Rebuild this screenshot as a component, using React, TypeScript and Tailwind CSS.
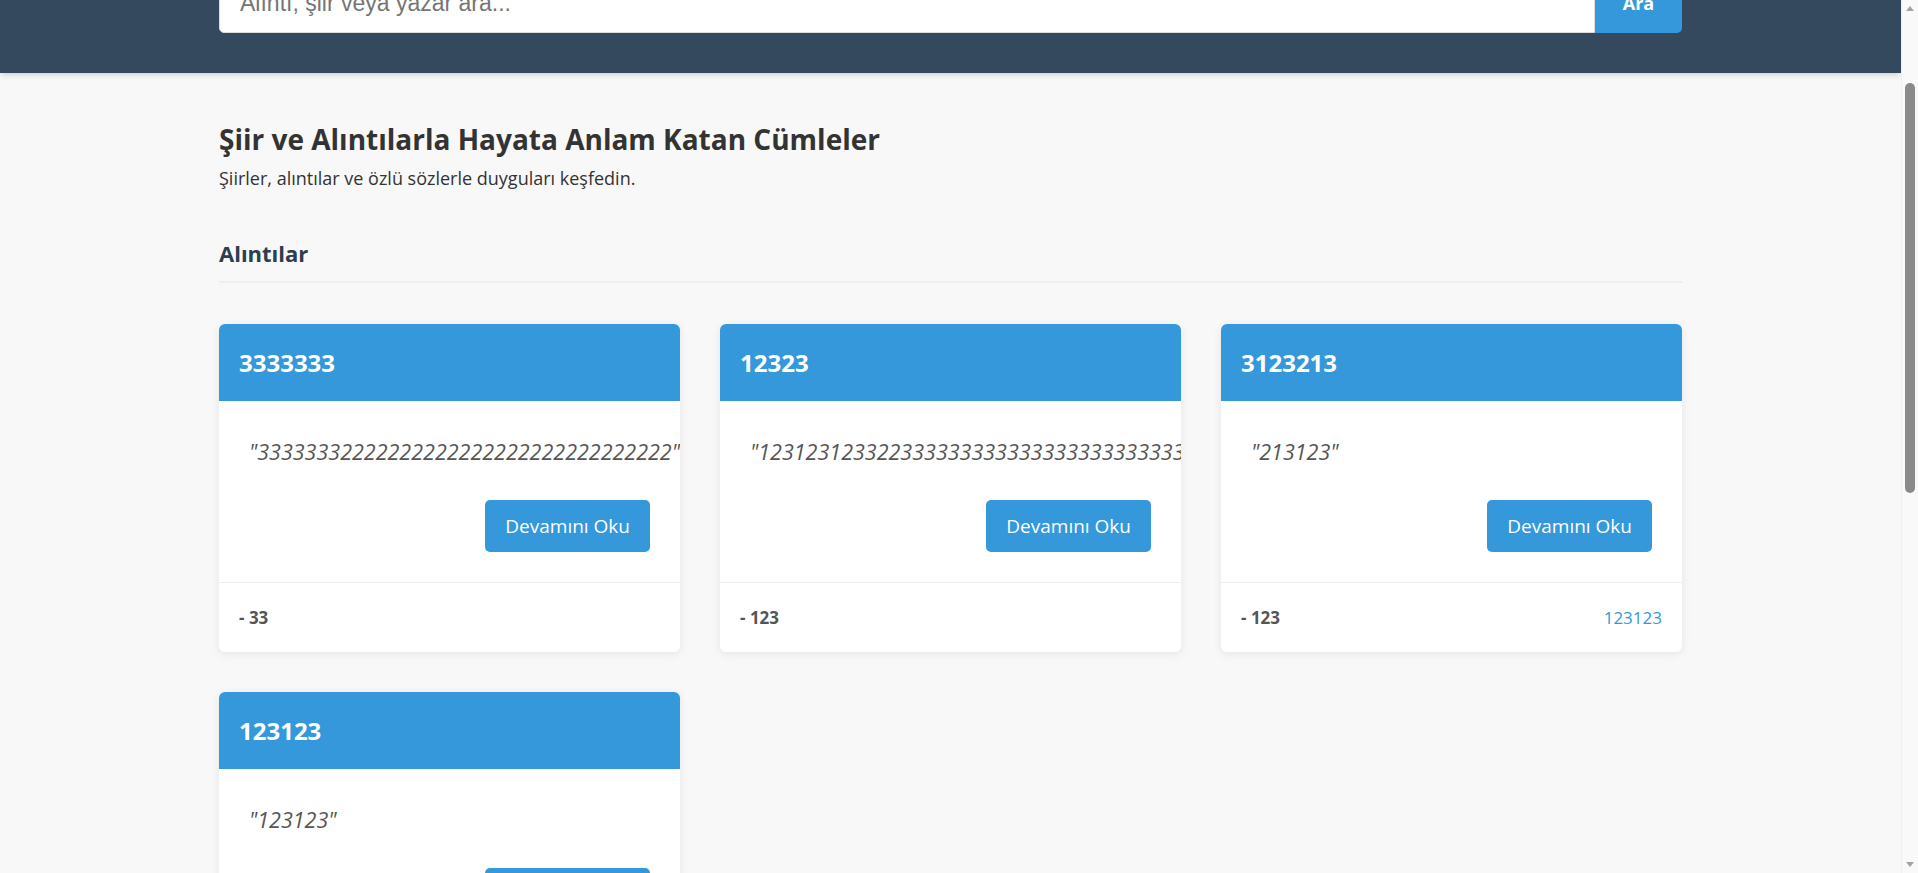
import { useLayoutEffect } from 'react';

interface Quote {
  id: number;
  title: string;
  text: string;
  author: string;
  source?: string;
}

const quotes: Quote[] = [
  { id: 1, title: '3333333', text: '33333332222222222222222222222222222', author: '33' },
  { id: 2, title: '12323', text: '123123123322333333333333333333333333333333333', author: '123' },
  { id: 3, title: '3123213', text: '213123', author: '123', source: '123123' },
  { id: 4, title: '123123', text: '123123', author: '123' },
];

function QuoteCard({ quote }: { quote: Quote }) {
  return (
    <div className="bg-white rounded-md shadow-[0_2px_10px_rgba(0,0,0,0.08)] overflow-hidden">
      <div className="bg-[#3498db] px-5 pt-[21px] pb-5">
        <h3 className="text-[24px] leading-[36px] font-bold text-white">{quote.title}</h3>
      </div>
      <div className="px-[30px] pt-[33px] pb-[30px]">
        <p className="text-[21.5px] leading-[36px] italic text-[#555] whitespace-nowrap">"{quote.text}"</p>
        <div className="flex justify-end mt-[30px]">
          <button className="h-[52px] px-5 bg-[#3498db] text-white text-[19px] rounded-[5px] hover:bg-[#2980b9]">
            Devamını Oku
          </button>
        </div>
      </div>
      <div className="border-t border-[#eee] h-[70px] px-5 flex items-center justify-between">
        <span className="text-[17px] font-bold text-[#555]">- {quote.author}</span>
        {quote.source && <a className="text-[17px] text-[#3498db]">{quote.source}</a>}
      </div>
    </div>
  );
}

// the browser's own scrollbar, as it shows in the screenshot
function ScrollbarStrip() {
  return (
    <div className="fixed top-0 right-0 h-screen w-[17px] bg-[#f9f9f9] border-l border-[#f0f0f0] flex flex-col items-center">
      <svg width="10" height="17" viewBox="0 0 10 17" className="shrink-0">
        <path d="M1 11 L5 6 L9 11 Z" fill="#a3a3a3" />
      </svg>
      <div className="mt-[66px] w-[10px] h-[410px] rounded-full bg-[#8a8a8a]" />
      <div className="flex-1" />
      <svg width="10" height="17" viewBox="0 0 10 17" className="shrink-0">
        <path d="M1 6 L5 11 L9 6 Z" fill="#a3a3a3" />
      </svg>
    </div>
  );
}

export default function App() {
  useLayoutEffect(() => {
    window.scrollTo(0, 140);
  }, []);

  return (
    <div className="min-h-[1780px] pr-[17px] bg-[#f8f8f8] font-['Open_Sans',sans-serif] text-[#333]">
      <header className="bg-[#34495e] shadow-md pt-[30px] pb-10">
        <div className="w-[1463px] mx-auto">
          <div className="h-[43px] flex items-center">
            <span className="text-white text-[28px] font-bold">Alıntılar</span>
          </div>
          <form className="flex mt-10 h-[60px]" onSubmit={(e) => e.preventDefault()}>
            <input
              className="flex-1 bg-white border border-[#ddd] rounded-l-[5px] px-5 text-[23px] text-[#333] placeholder:text-[#757575] outline-none font-['Liberation_Sans',sans-serif]"
              placeholder="Alıntı, şiir veya yazar ara..."
            />
            <button className="w-[87px] bg-[#3498db] text-white text-[18px] font-bold rounded-r-[5px]">Ara</button>
          </form>
        </div>
      </header>

      <main className="w-[1463px] mx-auto pt-12 pb-20">
        <h1 className="text-[28px] leading-[36px] font-bold text-[#333]">Şiir ve Alıntılarla Hayata Anlam Katan Cümleler</h1>
        <p className="text-[18px] leading-[30px] mt-[6px] text-[#333]">Şiirler, alıntılar ve özlü sözlerle duyguları keşfedin.</p>

        <section className="mt-[45px]">
          <h2 className="text-[22px] leading-[30px] font-bold text-[#2c3e50] pb-[13px] border-b-2 border-[#eee]">Alıntılar</h2>
          <div className="grid grid-cols-3 gap-10 mt-[41px]">
            {quotes.map((q) => (
              <QuoteCard key={q.id} quote={q} />
            ))}
          </div>
        </section>
      </main>

      <ScrollbarStrip />
    </div>
  );
}
